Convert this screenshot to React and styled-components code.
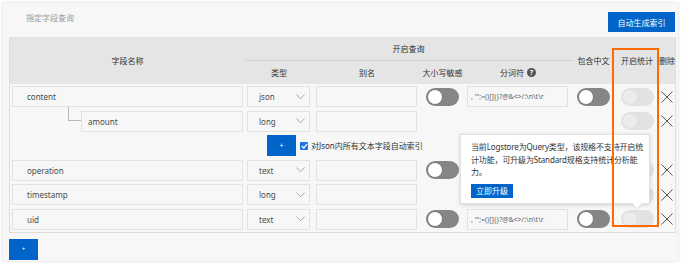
import React from "react";
import styled, { createGlobalStyle } from "styled-components";

const GlobalStyle = createGlobalStyle`
  html, body {
    margin: 0;
    padding: 0;
    background: #fff;
  }
  body {
    font-family: "Noto Sans", "Noto Sans CJK SC", sans-serif;
    font-size: 8px;
    color: #333;
  }
`;

// column widths of the field table, left to right
const COLS = "235px 68px 108px 43px 108px 43px 44px 16px";

const Card = styled.div`
  position: relative;
  margin: 3px;
  width: 675px;
  height: 258px;
  box-sizing: border-box;
  padding: 0 2px 0 6px;
  background: #f7f7f7;
  box-shadow: 0 0 3px rgba(0, 0, 0, 0.18);
`;

const TopBar = styled.div`
  height: 34px;
  display: flex;
  justify-content: space-between;
  align-items: flex-start;
  padding-top: 9px;
  box-sizing: border-box;
`;

const Title = styled.div`
  padding-left: 17px;
  line-height: 12px;
  color: #9a9a9a;
`;

const BlueButton = styled.button`
  border: none;
  margin: 0;
  padding: 0;
  background: #0064c8;
  color: #fff;
  font-family: inherit;
  font-size: ${(p) => p.fs || 8}px;
  width: ${(p) => p.w || 29}px;
  height: ${(p) => p.h || 21}px;
  display: flex;
  align-items: center;
  justify-content: center;
  margin-right: ${(p) => p.mr || 0}px;
`;

const Table = styled.div`
  border: 1px solid #dcdcdc;
  border-top: none;
`;

const Head = styled.div`
  display: grid;
  grid-template-columns: ${COLS};
  grid-template-rows: 24px 23px;
  background: #e5e5e5;
`;

const Th = styled.div`
  display: flex;
  align-items: center;
  justify-content: center;
  white-space: nowrap;
  color: #333;
  grid-column: ${(p) => p.col};
  grid-row: ${(p) => p.row};
  ${(p) => p.group && "border-bottom: 1px solid #d0d0d0;"}
`;

const Help = styled.span`
  display: inline-flex;
  align-items: center;
  justify-content: center;
  width: 9px;
  height: 9px;
  border-radius: 50%;
  background: #555;
  color: #fff;
  font-size: 7px;
  font-weight: bold;
  margin-left: 3px;
`;

const Body = styled.div`
  display: flex;
  flex-direction: column;
  gap: 3.5px;
  padding: 2px 0 2px;
`;

const Row = styled.div`
  display: grid;
  grid-template-columns: ${COLS};
  height: 21px;
  align-items: center;
`;

const NameCell = styled.div`
  display: flex;
  height: 100%;
  padding: 0 2px 0 ${(p) => (p.child ? 58 : 2)}px;
`;

const Connector = styled.div`
  width: 13px;
  flex: none;
  height: 14px;
  margin-top: -3.5px;
  border-left: 1px solid #b8b8b8;
  border-bottom: 1px solid #b8b8b8;
  box-sizing: border-box;
`;

const Field = styled.div`
  flex: 1;
  height: 21px;
  box-sizing: border-box;
  border: 1px solid #e2e2e2;
  background: #f7f7f7;
  display: flex;
  align-items: center;
  padding-left: ${(p) => p.pl || 14}px;
  margin-left: ${(p) => p.ml || 0}px;
  margin-right: ${(p) => p.mr || 0}px;
  color: ${(p) => (p.muted ? "#666" : "#4a4a4a")};
  font-size: ${(p) => (p.small ? 7 : 8)}px;
  white-space: nowrap;
  overflow: hidden;
`;

const Select = styled(Field)`
  justify-content: space-between;
  padding-right: 4px;
`;

const Center = styled.div`
  display: flex;
  justify-content: center;
  align-items: center;
`;

const Toggle = styled.div`
  position: relative;
  width: 33px;
  height: 18px;
  border-radius: 9px;
  background: ${(p) => (p.disabled ? "#e2e2e2" : "#868686")};
  box-sizing: border-box;

  &::after {
    content: "";
    position: absolute;
    left: 1px;
    top: 1px;
    width: 16px;
    height: 16px;
    border-radius: 50%;
    box-sizing: border-box;
    background: ${(p) => (p.disabled ? "#ececec" : "#fff")};
    border: 1px solid ${(p) => (p.disabled ? "#e0e0e0" : "#777")};
  }
`;

const JsonRow = styled.div`
  height: 21px;
  display: flex;
  align-items: center;
  padding-left: 257px;
  gap: 4px;
`;

const Check = styled.span`
  width: 8px;
  height: 8px;
  background: #1a73e8;
  border-radius: 1px;
  display: inline-flex;
  align-items: center;
  justify-content: center;
`;

const CheckLabel = styled.label`
  display: flex;
  align-items: center;
  gap: 3px;
  color: #333;
`;

const Footer = styled.div`
  padding-top: 6px;
`;

const Tooltip = styled.div`
  position: absolute;
  left: 457px;
  top: 131px;
  width: 190px;
  box-sizing: border-box;
  padding: 6px 4px 5px 10px;
  background: #fff;
  border: 1px solid #e0e0e0;
  box-shadow: 0 1px 4px rgba(0, 0, 0, 0.15);
  z-index: 2;
  color: #333;
  line-height: 12.5px;

  &::after {
    content: "";
    position: absolute;
    left: 173px;
    bottom: -4px;
    width: 6px;
    height: 6px;
    background: #fff;
    transform: rotate(45deg);
    box-shadow: 1px 1px 1px rgba(0, 0, 0, 0.08);
  }
`;

const TipText = styled.p`
  margin: 0 0 5px;
`;

const TipLine = styled.span`
  display: block;
  white-space: nowrap;
  letter-spacing: -0.15px;
`;

const Highlight = styled.div`
  position: absolute;
  left: 609px;
  top: 45px;
  width: 47px;
  height: 179px;
  border: 2px solid #ff6a00;
  box-sizing: border-box;
  z-index: 3;
  pointer-events: none;
`;

const Chevron = () => (
  <svg width="9" height="6" viewBox="0 0 9 6">
    <path d="M0.5 0.5 L4.5 4.8 L8.5 0.5" fill="none" stroke="#a0a0a0" strokeWidth="0.9" />
  </svg>
);

const Cross = () => (
  <svg width="12" height="12" viewBox="0 0 12 12">
    <path d="M0.5 0.5 L11.5 11.5 M11.5 0.5 L0.5 11.5" stroke="#444" strokeWidth="0.9" />
  </svg>
);

const TOKENS = ", '\";=()[]{}?@&<>/:\\n\\t\\r";

const fields = [
  { name: "content", type: "json", query: true, zh: true },
  { name: "amount", type: "long", child: true },
  { json: true },
  { name: "operation", type: "text", query: true, zh: true },
  { name: "timestamp", type: "long" },
  { name: "uid", type: "text", query: true, zh: true },
];

const FieldRow = ({ f }) => (
  <Row>
    <NameCell child={f.child}>
      {f.child && <Connector />}
      <Field pl={f.child ? 6 : 14}>{f.name}</Field>
    </NameCell>
    <Select ml={2} mr={3} pl={11}>
      {f.type}
      <Chevron />
    </Select>
    <Field ml={3} mr={4} />
    <Center>{f.query && <Toggle />}</Center>
    {f.query ? (
      <Field ml={3} mr={4} pl={3} muted small>
        {TOKENS}
      </Field>
    ) : (
      <div />
    )}
    <Center>{f.zh && <Toggle />}</Center>
    <Center>
      <Toggle disabled />
    </Center>
    <Center>
      <Cross />
    </Center>
  </Row>
);

export default function App() {
  return (
    <>
      <GlobalStyle />
      <Card>
        <TopBar>
          <Title>指定字段查询</Title>
          <BlueButton w={67} h={20} mr={1}>
            自动生成索引
          </BlueButton>
        </TopBar>
        <Table>
          <Head>
            <Th col="1" row="1 / 3">字段名称</Th>
            <Th col="2 / 6" row="1" group>开启查询</Th>
            <Th col="2" row="2">类型</Th>
            <Th col="3" row="2">别名</Th>
            <Th col="4" row="2">大小写敏感</Th>
            <Th col="5" row="2">
              分词符<Help>?</Help>
            </Th>
            <Th col="6" row="1 / 3">包含中文</Th>
            <Th col="7" row="1 / 3">开启统计</Th>
            <Th col="8" row="1 / 3">删除</Th>
          </Head>
          <Body>
            {fields.map((f, i) =>
              f.json ? (
                <JsonRow key={i}>
                  <BlueButton fs={7}>+</BlueButton>
                  <CheckLabel>
                    <Check>
                      <svg width="7" height="6" viewBox="0 0 7 6">
                        <path d="M0.8 3 L2.8 5 L6.2 0.8" fill="none" stroke="#fff" strokeWidth="1.2" />
                      </svg>
                    </Check>
                    对Json内所有文本字段自动索引
                  </CheckLabel>
                </JsonRow>
              ) : (
                <FieldRow key={i} f={f} />
              )
            )}
          </Body>
        </Table>
        <Footer>
          <BlueButton fs={6}>+</BlueButton>
        </Footer>
        <Tooltip>
          <TipText>
            <TipLine>当前Logstore为Query类型，该规格不支持开启统</TipLine>
            <TipLine>计功能，可升级为Standard规格支持统计分析能</TipLine>
            <TipLine>力。</TipLine>
          </TipText>
          <BlueButton w={42} h={14}>
            立即升级
          </BlueButton>
        </Tooltip>
        <Highlight />
      </Card>
    </>
  );
}
